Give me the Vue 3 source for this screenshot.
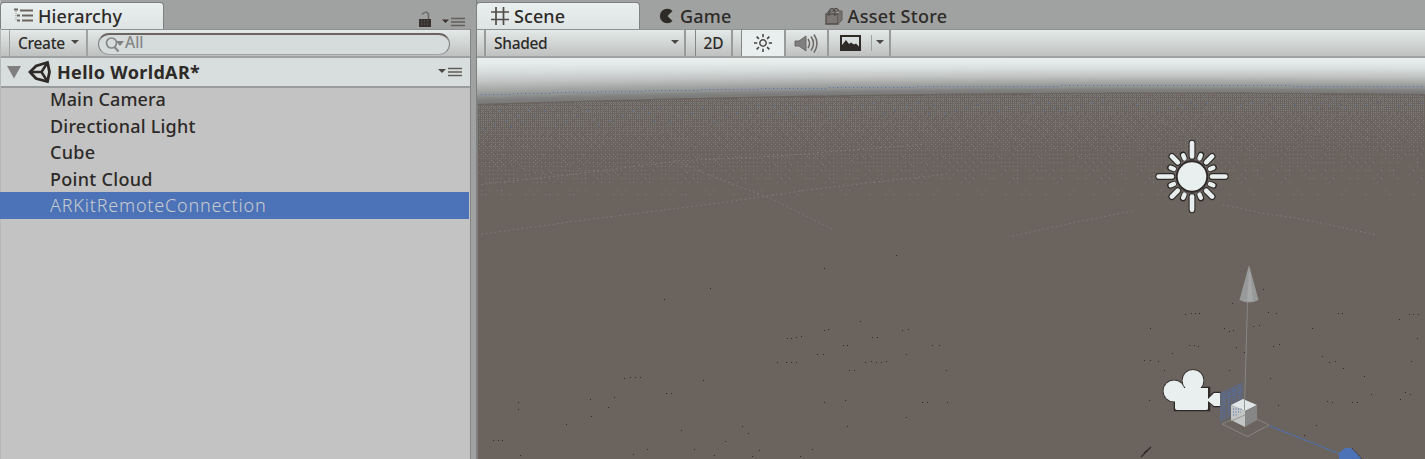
<script setup>
const objects = ['Main Camera', 'Directional Light', 'Cube', 'Point Cloud', 'ARKitRemoteConnection']
const selected = 'ARKitRemoteConnection'
const spacing = [0.15, 0.2, 0.3, 0.3, 0.8]

const W = 948
const H = 401

// Height of the horizon at a given column of the viewport.
const horizon = (x) => 34.5 + 11.5 * Math.pow((W - 250 - x) / 698, 2)

const stops = [
  [0, [233, 239, 238]], [0.12, [228, 234, 233]], [0.28, [216, 222, 222]],
  [0.5, [195, 196, 196]], [0.68, [166, 168, 167]], [0.82, [145, 147, 146]],
  [0.9, [127, 128, 127]], [1, [122, 122, 121]]
]
function skyColor(t) {
  for (let i = 1; i < stops.length; i++) {
    if (t <= stops[i][0]) {
      const [a, ca] = stops[i - 1]
      const [b, cb] = stops[i]
      const k = (t - a) / (b - a)
      return `rgb(${ca.map((v, j) => Math.round(v + (cb[j] - v) * k)).join(',')})`
    }
  }
  return 'rgb(122,122,121)'
}
function curve(t) {
  let d = ''
  for (let x = 0; x <= W; x += 12) d += `${x ? 'L' : 'M'}${x} ${(horizon(x) * t).toFixed(2)}`
  return `${d}V${H}H0Z`
}
const bands = Array.from({ length: 36 }, (_, i) => ({ d: curve(i / 36), fill: skyColor(i / 36) }))
const ground = curve(1)

// Ordered dither that fades the haze into the ground.
function bayer(x, y) {
  let v = 0
  for (let b = 0; b < 3; b++) {
    const xb = (x >> b) & 1
    const yb = (y >> b) & 1
    v = v * 4 + ((xb ^ yb) * 2 + yb)
  }
  return (v + 0.5) / 64
}
let haze = ''
for (let y = 34; y < 140; y++) {
  for (let x = 1; x < W; x++) {
    const d = y - horizon(x)
    if (d < 1) continue
    const reach = 118 - 22 * (x / W)
    const k = Math.max(0, 1 - d / reach)
    const grain = (((x * 73 + y * 151 + x * y * 7) % 17) / 17 - 0.5) * 0.07
    if (bayer(x, y) + grain < 0.34 * Math.pow(k, 2)) haze += `M${x} ${y}h1v1h-1z`
  }
}

let blue = ''
for (let x = 4; x < W; x += 4) blue += `M${x} ${Math.round(horizon(x) * 0.79)}h1v1h-1z`
for (let i = 0; i < 105; i++) {
  const x = (i * 137 + 23) % W
  const y = Math.round(horizon(x) + 8 + ((i * 7) % 13) * (1.5 - x / W))
  blue += `M${x} ${y}h1v1h-1z`
}

const specks = [
  [710, 288], [664, 299], [860, 321], [787, 338], [791, 338], [796, 337], [801, 336], [824, 330], [828, 329],
  [872, 337], [877, 337], [902, 330], [908, 329], [843, 345], [847, 345], [932, 345], [939, 345],
  [817, 354], [823, 354], [906, 354], [777, 362], [786, 362], [791, 362], [796, 362], [865, 362], [871, 361],
  [876, 362], [881, 362], [886, 361], [849, 370], [854, 370], [946, 370], [624, 378], [630, 377], [635, 377],
  [640, 377], [703, 380], [666, 393], [671, 393], [614, 397], [590, 399], [518, 402], [518, 409], [608, 407],
  [591, 416], [566, 424], [681, 430], [742, 426], [748, 433], [725, 441], [493, 440], [498, 440], [502, 440],
  [520, 455], [633, 454], [647, 449], [694, 449], [714, 455], [752, 456], [759, 450], [812, 449], [800, 456],
  [824, 402], [845, 400], [922, 402], [927, 402], [947, 402], [906, 417], [847, 426], [896, 255], [824, 268],
  [1185, 314], [1191, 313], [1195, 313], [1199, 313], [1268, 312], [1276, 313], [1338, 313], [1342, 313],
  [1409, 314], [1413, 314], [1418, 314], [1399, 319], [1150, 328], [1224, 328], [1229, 331], [1233, 330],
  [1253, 326], [1259, 325], [1312, 328], [1189, 345], [1194, 345], [1198, 346], [1236, 347], [1273, 346],
  [1279, 344], [1417, 338], [1144, 360], [1150, 360], [1158, 361], [1244, 352], [1172, 353], [1322, 356],
  [1329, 362], [1335, 361], [1343, 368], [1411, 361], [1164, 370], [1229, 370], [1270, 378], [1364, 376],
  [1405, 392], [1410, 394], [1371, 394], [1327, 401], [1332, 402], [1352, 402], [1357, 402], [1278, 405],
  [1316, 425], [1304, 435], [1400, 399], [1232, 303], [1263, 289], [1149, 400]
].map(([x, y]) => `M${x - 477} ${y - 58}h1v1h-1z`).join('')

const longRays = [0, 45, 90, 135, 180, 225, 270, 315]
const shortRays = [22.5, 67.5, 112.5, 157.5, 202.5, 247.5, 292.5, 337.5]
</script>

<template>
  <div class="editor">
    <section class="panel hierarchy">
      <header class="tabs">
        <div class="tab active tab-h">
          <svg width="20" height="16" viewBox="0 0 20 16">
            <path d="M0 1.500h4M6 2.500h13M3 7.500h3M8 7.500h11M3 12.500h3M8 12.500h11" stroke="#6b645f" stroke-width="2" />
            <path d="M2 3v10" stroke="#8b8986" stroke-dasharray="1 1" />
          </svg>
          <span class="t-hier">Hierarchy</span>
        </div>
        <div class="window-tools">
          <svg width="14" height="17" viewBox="0 0 14 17">
            <path d="M4 3.500Q8-.8 10.500 3V9" fill="none" stroke="#6f6d6a" stroke-width="1.700" />
            <rect x="1" y="8" width="12" height="8" fill="#38332f" />
            <path d="M3 10h8M3 13h8" stroke="#6b645f" stroke-dasharray="1 2" />
          </svg>
          <svg class="menu" width="24" height="10" viewBox="0 0 24 10">
            <path d="M1 2.500h7L4.500 6z" fill="#38332f" />
            <path d="M10 1.500h14M10 5h14M10 8.500h14" stroke="#625e5a" stroke-width="1.700" />
          </svg>
        </div>
      </header>
      <div class="toolbar">
        <div class="create"><span>Create</span><i class="caret"></i></div>
        <div class="search">
          <svg width="20" height="17" viewBox="0 0 20 17">
            <circle cx="6.500" cy="7" r="5" fill="none" stroke="#858786" stroke-width="1.700" />
            <path d="M9.500 11l4 4.500" stroke="#858786" stroke-width="2" />
            <path d="M11 5h8l-4 5z" fill="#7f8180" />
          </svg>
          <span>All</span>
        </div>
      </div>
      <div class="scene-row">
        <svg class="fold" width="14" height="13" viewBox="0 0 14 13"><path d="M0 0h14L7 12.500z" fill="#7f7f7f" /></svg>
        <svg class="unity" width="24" height="24" viewBox="0 0 24 24">
          <path d="M2 12L8 6 19.500 2.500 21.500 12 19.500 21.500 8 18.500z" fill="#d8dede" stroke="#2d2a28" stroke-width="2.800" />
          <path d="M3 12H13.500M13.500 12L19.500 2.500M13.500 12L19.500 21.500" stroke="#2d2a28" stroke-width="2.400" fill="none" />
        </svg>
        <span class="scene-name">Hello WorldAR*</span>
        <svg class="menu" width="24" height="10" viewBox="0 0 24 10">
          <path d="M0 2h8L4 6z" fill="#4b4744" />
          <path d="M10 1.500h14M10 5h14M10 8.500h14" stroke="#625e5a" stroke-width="1.500" />
        </svg>
      </div>
      <ul class="objects">
        <li v-for="(name, i) in objects" :key="name" :class="{ selected: name === selected }">
          <span :style="{ letterSpacing: spacing[i] + 'px' }">{{ name }}</span>
        </li>
      </ul>
    </section>

    <section class="panel scene">
      <header class="tabs">
        <div class="tab active tab-s">
          <svg width="18" height="18" viewBox="0 0 18 18">
            <path d="M5 0v18M12.500 0v18M0 5h18M0 12.500h18" stroke="#514c49" stroke-width="1.700" />
          </svg>
          <span class="t-scene">Scene</span>
        </div>
        <div class="tab tab-g">
          <svg width="15" height="16" viewBox="0 0 15 16">
            <path d="M13.500 3A7.300 7.300 0 1 0 13.500 13L8.500 8z" fill="#2d2a28" />
          </svg>
          <span class="t-game">Game</span>
        </div>
        <div class="tab tab-a">
          <svg width="18" height="18" viewBox="0 0 18 18">
            <path d="M1 7h12v10H1z" fill="#7c7774" stroke="#514c49" stroke-width="1.300" />
            <path d="M13 7l4-3v9l-4 4M1 7l3-3h13" fill="#777370" stroke="#615c58" />
            <path d="M4 9V4q3-5 6 0V9M8 4q3-5 6 0" fill="none" stroke="#514c49" stroke-width="1.300" />
          </svg>
          <span class="t-asset">Asset Store</span>
        </div>
      </header>
      <div class="toolbar">
        <div class="cell shaded"><span>Shaded</span><i class="caret"></i></div>
        <div class="cell two-d"><span>2D</span></div>
        <div class="cell light">
          <svg width="20" height="20" viewBox="-10 -10 20 20">
            <circle r="3.200" fill="none" stroke="#514c49" stroke-width="1.500" />
            <path v-for="a in longRays" :key="a" d="M0-5.800V-9" :transform="`rotate(${a})`" stroke="#45403d" stroke-width="1.500" />
          </svg>
        </div>
        <div class="cell sound">
          <svg width="24" height="21" viewBox="0 0 24 21">
            <path d="M1 8h4l7-5v15l-7-5H1z" fill="#7f7f7f" stroke="#6b6865" />
            <path d="M14 6q3 4.500 0 9M17 3.500q5 7 0 14M20 1.500q6 9 0 18" fill="none" stroke="#6b6865" stroke-width="1.500" />
          </svg>
        </div>
        <div class="cell effects">
          <svg width="21" height="16" viewBox="0 0 21 16">
            <rect x="1" y="1" width="19" height="14" fill="#d8dede" stroke="#2d2a28" stroke-width="2" />
            <path d="M2 10l4-5 3 4 2-1.500 3 2 2-1 3 3v3H2z" fill="#2d2a28" />
          </svg>
          <i class="divider"></i><i class="caret"></i>
        </div>
      </div>
      <svg class="viewport" width="948" height="401" viewBox="0 0 948 401">
        <path v-for="(b, i) in bands" :key="i" :d="b.d" :fill="b.fill" />
        <path :d="ground" fill="#6a635e" />
        <g shape-rendering="crispEdges">
          <path :d="haze" fill="#7f7f7f" />
          <path :d="blue" fill="#4c72b8" />
          <path :d="specks" fill="#2d2a28" />
        </g>
        <g fill="none" stroke="#7f7f7f" stroke-dasharray="1.500 3" stroke-width="1">
          <path d="M0 177L100 163 250 144 330 132 470 116M0 127L90 117 200 103 300 98 450 86" />
          <path d="M205 106L250 124 295 141 355 171M535 178L590 166 655 153M746 147L790 156 820 160 900 177" />
        </g>
        <path d="M0 46V401" stroke="#7f7f7f" stroke-width="2" />

        <g transform="translate(715 118.500) scale(.98)">
          <g stroke="#2d2a28" stroke-linecap="round">
            <path v-for="a in longRays" :key="a" :d="a % 90 ? 'M0-20.500V-29' : 'M0-20.500V-34'" :transform="`rotate(${a})`" stroke-width="7" />
            <path v-for="a in shortRays" :key="a" d="M0-20.500V-24" :transform="`rotate(${a})`" stroke-width="6.500" />
            <circle r="16.500" fill="#2d2a28" stroke="none" />
          </g>
          <g stroke="#e9efee" stroke-linecap="round">
            <path v-for="a in longRays" :key="a" :d="a % 90 ? 'M0-20.500V-29' : 'M0-20.500V-34'" :transform="`rotate(${a})`" stroke-width="4.800" />
            <path v-for="a in shortRays" :key="a" d="M0-20V-23.500" :transform="`rotate(${a})`" stroke-width="4.500" />
            <circle r="14.600" fill="#e9efee" stroke="none" />
          </g>
        </g>

        <g transform="translate(-477 -58)">
          <path d="M1247.500 302L1244.500 405" stroke="#858685" />
          <path d="M1249 265L1239.500 300Q1249 305 1258.500 300z" fill="#989a99" />
          <path d="M1249.500 268L1247 301H1253z" fill="#a6a8a7" />
          <g stroke="#2d2a28" stroke-width="2.500" fill="#2d2a28">
            <circle cx="1174" cy="391" r="10" /><circle cx="1193" cy="380.500" r="10" />
            <path d="M1175 388h34v22h-34zM1208 399l6-6h6v13h-6z" />
          </g>
          <g fill="#e9efee">
            <circle cx="1174" cy="391" r="10.500" /><circle cx="1193" cy="380.500" r="10.500" />
            <path d="M1175 388H1208V408.500Q1208 410 1206 410H1177Q1175 410 1175 408zM1208 399l6-6h6v13h-6l-6-5z" />
          </g>
          <path d="M1220 393L1243 383V413L1220 422z" fill="#646672" />
          <path d="M1221 393L1243 383M1221 396L1243 387M1221 400L1242 391M1221 404V422M1224 394V418M1229 392V414M1234 389V402M1240 386V400" stroke="#4c72b8" stroke-dasharray="1 1" />
          <path d="M1222 424L1247.500 436.500 1269 425 1257 419M1222 424L1231 420" fill="none" stroke="#858685" />
          <path d="M1231 405L1243 399 1257 405 1245 411z" fill="#e1e7e6" />
          <path d="M1231 405L1245 411V427L1231 420z" fill="#c3c4c4" />
          <path d="M1245 411L1257 405V420L1245 427z" fill="#858685" />
          <path d="M1233 409h9M1233 412h8M1233 415h5" stroke="#4c72b8" stroke-dasharray="1 1.500" />
          <path d="M1231 421L1245 415M1244.500 399V410" stroke="#969897" />
          <path d="M1270 426L1340 454" stroke="#4c72b8" stroke-width="1.200" stroke-dasharray="3 1" />
          <path d="M1339 459V453L1345 448H1351L1362 459z" fill="#4c72b8" />
          <path d="M1352 448L1362 459" stroke="#2d2a28" stroke-dasharray="1 1" />
          <path d="M1141 457L1151 447M1144 453l5-4" stroke="#2d2a28" stroke-width="1.200" />
        </g>
      </svg>
    </section>
  </div>
</template>

<style>
body { margin: 0; overflow: hidden; }
</style>

<style scoped>
* { box-sizing: border-box; }
.editor {
  width: 1425px; height: 459px; display: flex; gap: 5px; overflow: hidden;
  background: #a0a2a1; color: #2d2a28;
  font: 500 18px/1 "Noto Sans", "Open Sans", sans-serif; white-space: nowrap;
}
svg { display: block; flex: none; }
.panel { display: flex; flex-direction: column; flex: none; }
.hierarchy { width: 471px; background: #c3c3c3; border-right: 1px solid #858786; border-left: 1px solid #b5b8b7; }
.scene { width: 949px; border-left: 1px solid #7f7f7f; }
.tabs { height: 29px; flex: none; display: flex; background: #a0a2a1; padding-top: 2px; margin-right: -1px; }
.tab { display: flex; align-items: center; height: 27px; }
.active { background: linear-gradient(#e9efee, #dde4e3); border: 1px solid #7f8180; border-bottom: 0; border-radius: 4px 4px 0 0; }
.tab-h { width: 164px; margin-left: -1px; padding-left: 13px; gap: 4px; }
.t-hier { letter-spacing: 0.1px; }
.window-tools { display: flex; margin-left: 254px; padding-top: 9px; gap: 9px; }
.window-tools .menu { margin-top: 6px; }
.toolbar {
  height: 29px; flex: none; display: flex; border-top: 1px solid #8f9190; border-bottom: 2px solid #a0a2a1;
  background: linear-gradient(#e3e9e8, #d2d6d5 50%, #bfc0c0); font-size: 15.500px;
}
.create { width: 79px; margin-left: 8px; border: solid #a0a2a1; border-width: 0 2px 0 1px; display: flex; align-items: center; padding: 0 7px 0 8px; justify-content: space-between; }
.create span, .cell span { margin-top: 2px; }
.create span { letter-spacing: -0.3px; }
.caret { width: 0; height: 0; border: 4px solid transparent; border-top: 4px solid #4b4744; border-bottom: 0; margin-top: -3px; }
.search {
  margin: 3px 0 0 10px; width: 352px; height: 22px; border: 1px solid #7f8180; border-top: 2px solid #6b645f;
  border-bottom-color: #a0a2a1; border-radius: 12px; background: #d6dbdb; display: flex; align-items: center;
  padding-left: 6px; color: #858786;
}
.search span { margin-top: -3px; }
.scene-row { height: 30px; flex: none; display: flex; align-items: center; background: #d8dede; border-bottom: 2px solid #9a9c9b; padding-right: 8px; }
.fold { margin-left: 6px; }
.unity { margin-left: 7px; }
.scene-name { font-weight: 700; margin-left: 5px; letter-spacing: 0.35px; }
.scene-row .menu { margin-left: auto; }
.objects { list-style: none; margin: 0; padding: 0; margin-top: -2px; }
.objects li { height: 26.500px; display: flex; align-items: center; padding-left: 49px; }
.objects .selected { background: #4c72b8; color: #c9cccd; font-weight: 300; margin: 0 1px 0 -1px; padding-left: 50px; }
.tab-s { width: 164px; padding-left: 14px; gap: 5px; margin-left: -1px; }
.t-scene { letter-spacing: 0.1px; }
.tab-g { margin-left: 19px; gap: 6px; }
.t-game { letter-spacing: 0.2px; }
.tab-a { margin-left: 93px; gap: 5px; }
.t-asset { letter-spacing: 0.3px; }
.cell { display: flex; align-items: center; justify-content: center; border-right: 2px solid #999b9a; }
.shaded { width: 202px; margin-left: 7px; border-left: 2px solid #999b9a; justify-content: space-between; padding: 0 5px 0 8px; }
.shaded span { letter-spacing: -0.3px; }
.two-d { width: 38px; margin-left: 9px; border-left: 1px solid #858786; }
.light { width: 45px; margin-left: 8px; background: #e9efee; border-left: 1px solid #858786; }
.sound { width: 43px; padding-right: 2px; }
.effects { width: 62px; padding-left: 6px; }
.divider { width: 1px; height: 16px; background: #a0a2a1; margin: 0 4px 0 10px; }
</style>
